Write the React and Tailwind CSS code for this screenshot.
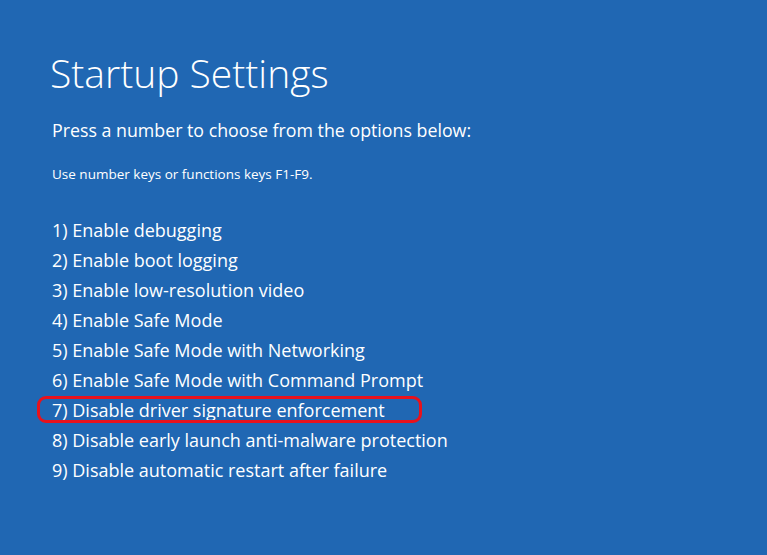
import React from 'react';

const options = [
  '1) Enable debugging',
  '2) Enable boot logging',
  '3) Enable low-resolution video',
  '4) Enable Safe Mode',
  '5) Enable Safe Mode with Networking',
  '6) Enable Safe Mode with Command Prompt',
  '7) Disable driver signature enforcement',
  '8) Disable early launch anti-malware protection',
  '9) Disable automatic restart after failure',
];

export default function App() {
  return (
    <div
      className="w-[767px] h-[555px] bg-[#2067b3] text-white overflow-hidden pl-[50px] pt-[49px]"
      style={{ fontFamily: '"Open Sans", "Noto Sans", sans-serif' }}
    >
      <h1 className="text-[39px] leading-[48px] font-light">Startup Settings</h1>
      <p className="mt-[21px] ml-[2px] text-[17.8px] leading-[24px]">Press a number to choose from the options below:</p>
      <p className="mt-[23px] ml-[2px] text-[13.5px] leading-[18px]">Use number keys or functions keys F1-F9.</p>

      <ul className="mt-[32px] ml-[2px]">
        {options.map((opt, i) => (
          <li key={opt} className="relative text-[18px] leading-[30px]">
            {opt}
            {i === 6 && (
              <span className="absolute left-[-15px] top-[1px] w-[385px] h-[27px] border-[3.5px] border-[#e8121c] rounded-[9px]" />
            )}
          </li>
        ))}
      </ul>
    </div>
  );
}
